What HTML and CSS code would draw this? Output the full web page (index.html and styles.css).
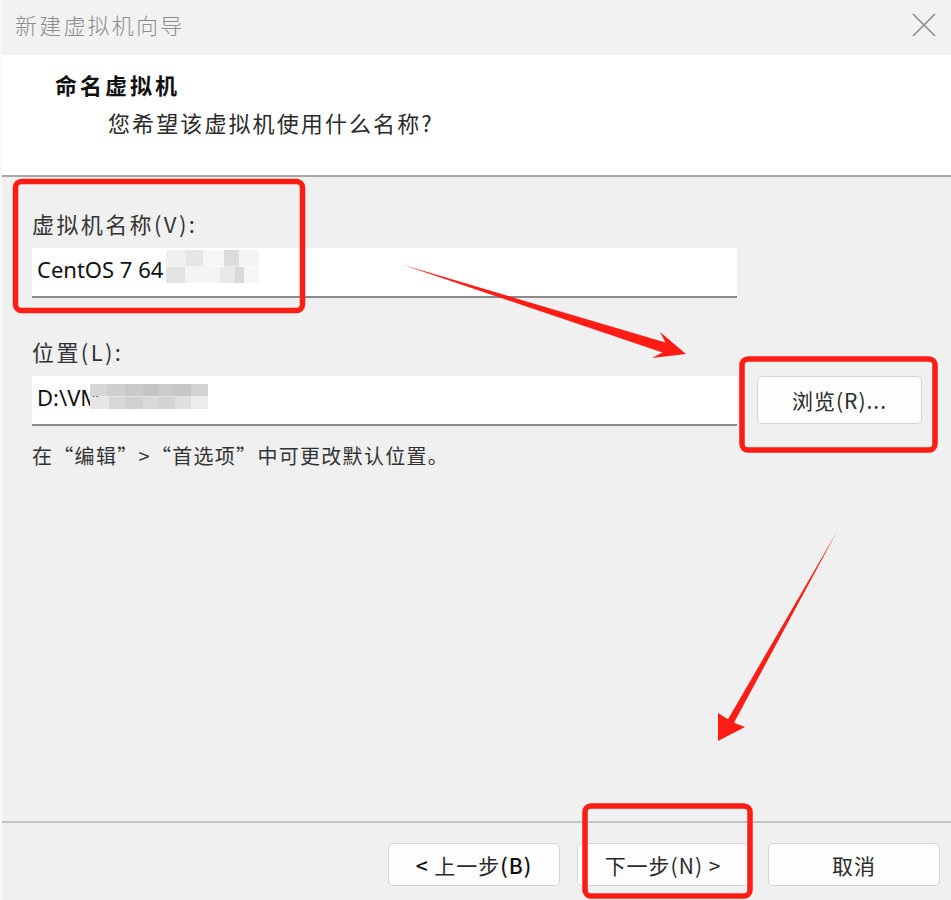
FILE: index.html
```html
<!DOCTYPE html>
<html lang="zh-CN">
<head>
<meta charset="utf-8">
<title>新建虚拟机向导</title>
<link rel="stylesheet" href="styles.css">
</head>
<body>
<div class="window">
  <div class="titlebar">
    <span class="title">新建虚拟机向导</span>
    <svg class="close" width="24" height="24" viewBox="0 0 24 24"><path d="M1 1 L23 23 M23 1 L1 23" stroke="#8c8c8c" stroke-width="1.6" fill="none"/></svg>
  </div>
  <div class="header">
    <div class="h-title">命名虚拟机</div>
    <div class="h-sub">您希望该虚拟机使用什么名称?</div>
  </div>
  <div class="content">
    <div class="field-label">虚拟机名称(V):</div>
    <div class="input">
      <span class="value">CentOS 7 64</span><span class="mosaic mosaic-name"></span>
    </div>
    <div class="field-label loc-label">位置(L):</div>
    <div class="loc-row">
      <div class="input input-loc">
        <span class="value">D:\VM</span><span class="mosaic mosaic-loc"></span>
      </div>
      <button class="btn browse">浏览(R)...</button>
    </div>
    <div class="hint">在“编辑”&gt;“首选项”中可更改默认位置。</div>
  </div>
  <div class="footer">
    <button class="btn fbtn back"><b>&lt;</b> 上一步<b>(B)</b></button>
    <button class="btn fbtn next">下一步(N) &gt;</button>
    <button class="btn fbtn cancel">取消</button>
  </div>
  <svg class="annotations" width="951" height="900" viewBox="0 0 951 900">
    <g fill="none" stroke="#ff1c14" stroke-width="5.5">
      <rect x="15.5" y="181.5" width="287" height="129" rx="6"/>
      <rect x="742" y="359" width="193" height="91" rx="6"/>
      <rect x="585" y="806" width="165" height="90" rx="6"/>
    </g>
    <g fill="#ff1c14">
      <polygon points="402,264.5 665.5,342.5 660,332 686,354 652,358 662.5,352.5"/>
      <polygon points="837,531.5 734,722.7 745,727 718,741 718,713 728,719.3"/>
    </g>
  </svg>
</div>
</body>
</html>
```

FILE: styles.css
```css
* { box-sizing: border-box; }

html, body {
  margin: 0;
  padding: 0;
  background: #f0f0f0;
}

body {
  font-family: "Noto Sans CJK SC", "Noto Sans", sans-serif;
  color: #222;
}

.window {
  position: relative;
  width: 951px;
  height: 900px;
  display: flex;
  flex-direction: column;
  background: #f0f0f0;
  border-left: 2px solid #f8f8f8;
}

.titlebar {
  height: 55px;
  flex: none;
  background: #f2f2f2;
  display: flex;
  align-items: flex-start;
  justify-content: space-between;
  padding: 9px 15px 0 13px;
}

.title {
  font-size: 22px;
  line-height: 30px;
  letter-spacing: 2.2px;
  color: #8d8d8d;
  font-weight: 300;
}

.close {
  margin-top: 4px;
}

.header {
  height: 122px;
  flex: none;
  background: #ffffff;
  border-bottom: 2px solid #a6a6a6;
  padding: 14px 0 0 53px;
}

.h-title {
  font-size: 22px;
  line-height: 30px;
  font-weight: 700;
  letter-spacing: 3px;
  color: #111;
}

.h-sub {
  margin-top: 8px;
  padding-left: 53px;
  font-size: 22px;
  line-height: 30px;
  letter-spacing: 2.1px;
  color: #2a2a2a;
}

.content {
  flex: 1;
  padding: 31px 0 0 30px;
}

.field-label {
  font-size: 22px;
  line-height: 30px;
  letter-spacing: 2.4px;
  color: #333;
}

.loc-label {
  margin-top: 38px;
}

.input {
  margin-top: 10px;
  width: 705px;
  height: 50px;
  background: #ffffff;
  border-bottom: 2px solid #8a8a8a;
  display: flex;
  align-items: flex-start;
  padding: 6px 0 0 5px;
}

.value {
  font-size: 22px;
  line-height: 30px;
  color: #111;
  font-family: "Noto Sans", "Noto Sans CJK SC", sans-serif;
  white-space: nowrap;
}

.mosaic {
  display: inline-block;
  flex: none;
}

.mosaic-name {
  width: 93px;
  height: 33px;
  margin-top: -4px;
  margin-left: 3px;
  background:
    linear-gradient(90deg, #efefef 0 22%, #e6e6e6 22% 40%, #f6f6f6 40% 62%, #dcdcdc 62% 78%, #f3f3f3 78% 100%) top / 100% 50% no-repeat,
    linear-gradient(90deg, #e3e3e3 0 20%, #f4f4f4 20% 58%, #e8e8e8 58% 74%, #d9d9d9 74% 84%, #f7f7f7 84% 100%) bottom / 100% 50% no-repeat;
}

.loc-row {
  display: flex;
  align-items: flex-start;
  gap: 20px;
}

.mosaic-loc {
  width: 118px;
  height: 25px;
  margin-top: 2px;
  margin-left: -10px;
  background:
    linear-gradient(90deg, #d6d6d6 0 14%, #cfcfcf 14% 30%, #c9c9c9 30% 45%, #c4c4c4 45% 58%, #cbcbcb 58% 72%, #c6c6c6 72% 86%, #d2d2d2 86% 100%) top / 100% 50% no-repeat,
    linear-gradient(90deg, #e6e6e6 0 16%, #d7d7d7 16% 30%, #d0d0d0 30% 45%, #d9d9d9 45% 58%, #d3d3d3 58% 72%, #dfdfdf 72% 86%, #ececec 86% 100%) bottom / 100% 50% no-repeat;
}

.btn {
  font-family: "Noto Sans CJK SC", "Noto Sans", sans-serif;
  font-size: 21px;
  color: #2a2a2a;
  background: #fdfdfd;
  border: 1.5px solid #d4d4d4;
  border-radius: 5px;
  padding: 0;
  letter-spacing: 1px;
}

.browse {
  margin-top: 10px;
  width: 165px;
  height: 48px;
}

.hint {
  margin-top: 15px;
  font-size: 20px;
  line-height: 30px;
  letter-spacing: 1.3px;
  color: #333;
}

.footer {
  height: 79px;
  flex: none;
  border-top: 2px solid #c2c2c2;
  display: flex;
  justify-content: flex-end;
  align-items: flex-start;
  padding: 20px 11px 0 0;
}

.fbtn {
  width: 172px;
  height: 43px;
}

.fbtn b {
  font-weight: 500;
  color: #111;
}

.next {
  margin-left: 17px;
}

.cancel {
  margin-left: 19px;
}

.annotations {
  position: absolute;
  left: -2px;
  top: 0;
  pointer-events: none;
}
```
